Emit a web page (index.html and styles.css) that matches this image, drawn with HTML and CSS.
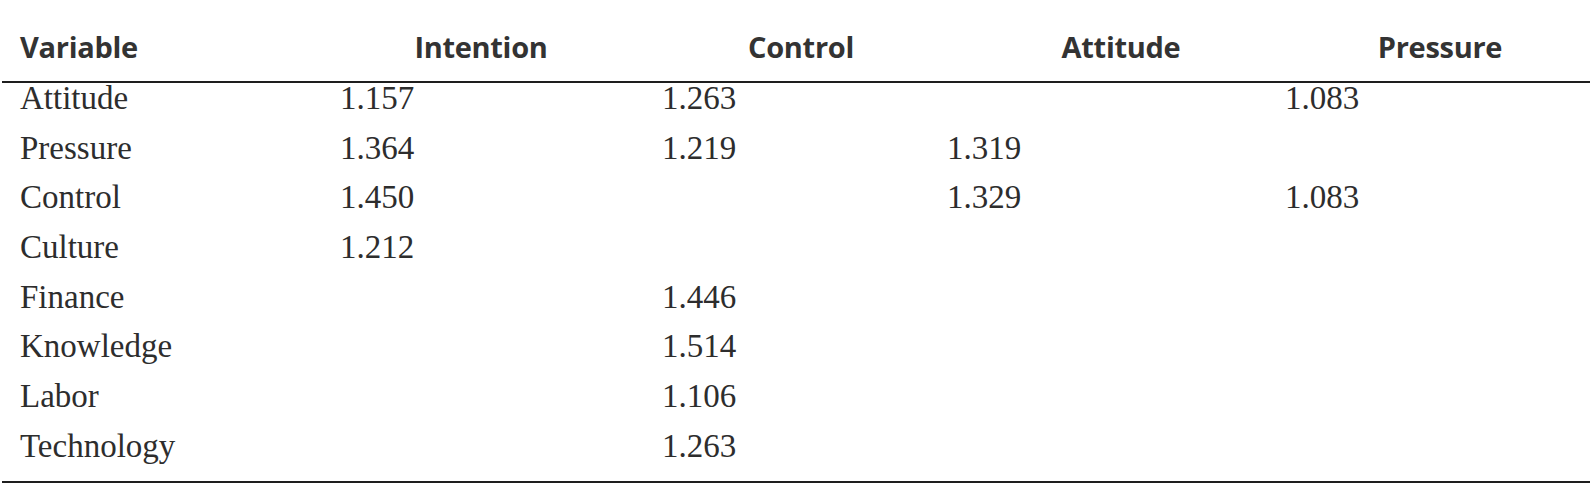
FILE: index.html
```html
<!DOCTYPE html>
<html lang="en">
<head>
  <meta charset="UTF-8">
  <title>Variable table</title>
  <link rel="stylesheet" href="styles.css">
</head>
<body>
  <div class="table">
    <div class="head">
      <div class="hcell first">Variable</div>
      <div class="hcell">Intention</div>
      <div class="hcell">Control</div>
      <div class="hcell">Attitude</div>
      <div class="hcell last">Pressure</div>
    </div>

    <div class="rows">
      <div class="row">
        <div>Attitude</div><div>1.157</div><div>1.263</div><div></div><div>1.083</div>
      </div>
      <div class="row">
        <div>Pressure</div><div>1.364</div><div>1.219</div><div>1.319</div><div></div>
      </div>
      <div class="row">
        <div>Control</div><div>1.450</div><div></div><div>1.329</div><div>1.083</div>
      </div>
      <div class="row">
        <div>Culture</div><div>1.212</div><div></div><div></div><div></div>
      </div>
      <div class="row">
        <div>Finance</div><div></div><div>1.446</div><div></div><div></div>
      </div>
      <div class="row">
        <div>Knowledge</div><div></div><div>1.514</div><div></div><div></div>
      </div>
      <div class="row">
        <div>Labor</div><div></div><div>1.106</div><div></div><div></div>
      </div>
      <div class="row">
        <div>Technology</div><div></div><div>1.263</div><div></div><div></div>
      </div>
    </div>
  </div>
</body>
</html>
```

FILE: styles.css
```css
body {
  margin: 0;
  background-color: #fff;
  color: #2d2d2d;
}

.table {
  margin-left: 2px;
  border-bottom: 2px solid #1e1e1e;
}

.head {
  display: grid;
  grid-template-columns: 319px 320px 320px 320px 1fr;
  padding-top: 27px;
  padding-bottom: 14px;
  border-bottom: 2px solid #1e1e1e;
  font-family: "Open Sans", "Liberation Sans", sans-serif;
  font-weight: bold;
  font-size: 29px;
  letter-spacing: -0.3px;
  line-height: 40px;
  color: #333;
}

.hcell {
  text-align: center;
}

.hcell.first {
  text-align: left;
  padding-left: 18px;
}

.hcell.last {
  padding-left: 9px;
  padding-right: 0;
}

.row {
  display: grid;
  grid-template-columns: 320px 322px 285px 338px 1fr;
  padding-left: 18px;
  padding-bottom: 19.7px;
  font-family: "Liberation Serif", "Times New Roman", serif;
  font-size: 33px;
  line-height: 30px;
}
```
